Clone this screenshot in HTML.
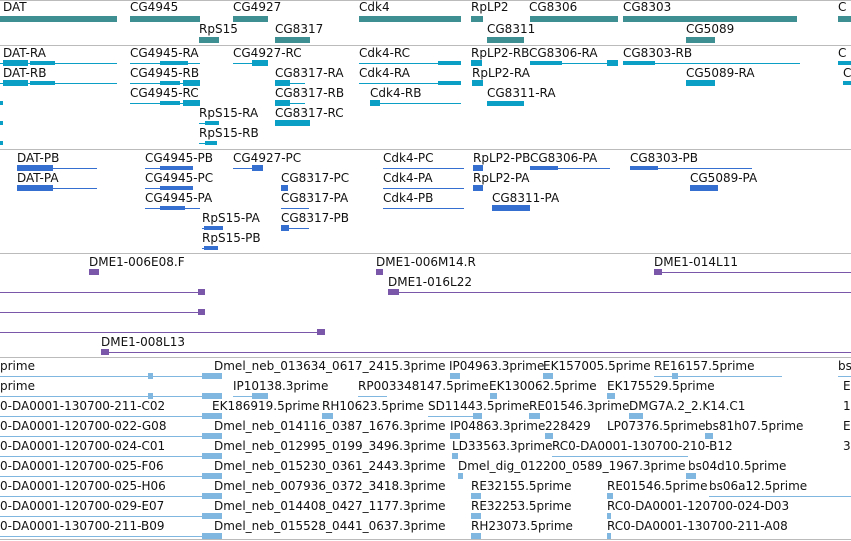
<!DOCTYPE html>
<html><head><meta charset="utf-8"><style>
body{margin:0;width:851px;height:541px;overflow:hidden;background:#fff;position:relative}
.t{position:absolute;font:12px/14px "DejaVu Sans",sans-serif;white-space:nowrap;color:#111}
.l{position:absolute;height:1px}
.b{position:absolute;height:6px}
.s{position:absolute;left:0;width:851px;height:1px;background:#bbb}
.a .l,.a .b{background:#3d8f91}
.c .l,.c .b{background:#0b9fc6}
.d .l,.d .b{background:#3570d0}
.e .l,.e .b{background:#7a57a8}
.f .l,.f .b{background:#7fb7e0}
</style></head><body>
<div class="s" style="top:0"></div>
<div class="s" style="top:45px"></div>
<div class="s" style="top:149px"></div>
<div class="s" style="top:253px"></div>
<div class="s" style="top:357px"></div>
<div class="s" style="top:539px"></div>

<div class="a">
<div class="t" style="left:3px;top:0">DAT</div><div class="b" style="left:0;width:117px;top:16px"></div>
<div class="t" style="left:130px;top:0">CG4945</div><div class="b" style="left:130px;width:70px;top:16px"></div>
<div class="t" style="left:233px;top:0">CG4927</div><div class="b" style="left:233px;width:35px;top:16px"></div>
<div class="t" style="left:359px;top:0">Cdk4</div><div class="b" style="left:359px;width:102px;top:16px"></div>
<div class="t" style="left:471px;top:0">RpLP2</div><div class="b" style="left:471px;width:12px;top:16px"></div>
<div class="t" style="left:529px;top:0">CG8306</div><div class="b" style="left:530px;width:88px;top:16px"></div>
<div class="t" style="left:623px;top:0">CG8303</div><div class="b" style="left:623px;width:174px;top:16px"></div>
<div class="t" style="left:838px;top:0">C</div><div class="b" style="left:838px;width:13px;top:16px"></div>
<div class="t" style="left:199px;top:22px">RpS15</div><div class="b" style="left:199px;width:20px;top:37px"></div>
<div class="t" style="left:275px;top:22px">CG8317</div><div class="b" style="left:275px;width:35px;top:37px"></div>
<div class="t" style="left:487px;top:22px">CG8311</div><div class="b" style="left:487px;width:37px;top:37px"></div>
<div class="t" style="left:686px;top:22px">CG5089</div><div class="b" style="left:686px;width:29px;top:37px"></div>
</div>

<div class="c">
<div class="t" style="left:3px;top:46px">DAT-RA</div><div class="l" style="left:0;width:117px;top:63px"></div><div class="b" style="left:3px;width:25px;top:60px"></div><div class="b" style="left:30px;width:25px;top:61px;height:4px"></div>
<div class="t" style="left:130px;top:46px">CG4945-RA</div><div class="l" style="left:130px;width:70px;top:63px"></div><div class="b" style="left:160px;width:28px;top:61px;height:4px"></div>
<div class="t" style="left:233px;top:46px">CG4927-RC</div><div class="l" style="left:233px;width:35px;top:63px"></div><div class="b" style="left:252px;width:16px;top:60px"></div>
<div class="t" style="left:359px;top:46px">Cdk4-RC</div><div class="l" style="left:359px;width:102px;top:63px"></div><div class="b" style="left:438px;width:23px;top:61px;height:4px"></div>
<div class="t" style="left:471px;top:46px">RpLP2-RB</div><div class="b" style="left:471px;width:11px;top:60px"></div>
<div class="t" style="left:529px;top:46px">CG8306-RA</div><div class="l" style="left:530px;width:88px;top:63px"></div><div class="b" style="left:530px;width:32px;top:61px;height:4px"></div><div class="b" style="left:607px;width:11px;top:60px"></div>
<div class="t" style="left:623px;top:46px">CG8303-RB</div><div class="l" style="left:623px;width:177px;top:63px"></div><div class="b" style="left:623px;width:32px;top:61px;height:4px"></div>
<div class="t" style="left:838px;top:46px">C</div><div class="b" style="left:838px;width:13px;top:61px;height:4px"></div>

<div class="t" style="left:3px;top:66px">DAT-RB</div><div class="l" style="left:0;width:117px;top:83px"></div><div class="b" style="left:3px;width:25px;top:80px"></div><div class="b" style="left:30px;width:25px;top:81px;height:4px"></div>
<div class="t" style="left:130px;top:66px">CG4945-RB</div><div class="l" style="left:130px;width:70px;top:83px"></div><div class="b" style="left:183px;width:17px;top:80px"></div><div class="b" style="left:160px;width:20px;top:81px;height:4px"></div>
<div class="t" style="left:275px;top:66px">CG8317-RA</div><div class="l" style="left:275px;width:30px;top:83px"></div><div class="b" style="left:275px;width:15px;top:80px"></div>
<div class="t" style="left:359px;top:66px">Cdk4-RA</div><div class="l" style="left:359px;width:102px;top:83px"></div><div class="b" style="left:438px;width:23px;top:81px;height:4px"></div>
<div class="t" style="left:472px;top:66px">RpLP2-RA</div><div class="b" style="left:472px;width:11px;top:80px"></div>
<div class="t" style="left:686px;top:66px">CG5089-RA</div><div class="b" style="left:686px;width:29px;top:80px"></div>
<div class="t" style="left:843px;top:66px">C</div><div class="b" style="left:843px;width:8px;top:81px;height:4px"></div>

<div class="b" style="left:0;width:3px;top:101px;height:4px"></div>
<div class="t" style="left:130px;top:86px">CG4945-RC</div><div class="l" style="left:130px;width:70px;top:103px"></div><div class="b" style="left:183px;width:17px;top:100px"></div><div class="b" style="left:160px;width:20px;top:101px;height:4px"></div>
<div class="t" style="left:275px;top:86px">CG8317-RB</div><div class="l" style="left:275px;width:30px;top:103px"></div><div class="b" style="left:275px;width:15px;top:100px"></div>
<div class="t" style="left:370px;top:86px">Cdk4-RB</div><div class="l" style="left:370px;width:91px;top:103px"></div><div class="b" style="left:370px;width:10px;top:100px"></div>
<div class="t" style="left:487px;top:86px">CG8311-RA</div><div class="b" style="left:487px;width:37px;top:101px;height:5px"></div>

<div class="b" style="left:0;width:3px;top:121px;height:4px"></div>
<div class="t" style="left:199px;top:106px">RpS15-RA</div><div class="l" style="left:199px;width:20px;top:123px"></div><div class="b" style="left:205px;width:14px;top:121px;height:4px"></div>
<div class="t" style="left:275px;top:106px">CG8317-RC</div><div class="b" style="left:275px;width:35px;top:120px"></div>
<div class="b" style="left:0;width:3px;top:141px;height:4px"></div>
<div class="t" style="left:199px;top:126px">RpS15-RB</div><div class="l" style="left:199px;width:18px;top:143px"></div><div class="b" style="left:205px;width:12px;top:141px;height:4px"></div>
</div>

<div class="d">
<div class="t" style="left:17px;top:151px">DAT-PB</div><div class="l" style="left:17px;width:80px;top:168px"></div><div class="b" style="left:17px;width:36px;top:165px"></div>
<div class="t" style="left:145px;top:151px">CG4945-PB</div><div class="l" style="left:145px;width:48px;top:168px"></div><div class="b" style="left:160px;width:33px;top:166px;height:4px"></div>
<div class="t" style="left:233px;top:151px">CG4927-PC</div><div class="l" style="left:233px;width:30px;top:168px"></div><div class="b" style="left:252px;width:11px;top:165px"></div>
<div class="t" style="left:383px;top:151px">Cdk4-PC</div><div class="l" style="left:383px;width:81px;top:168px"></div>
<div class="t" style="left:473px;top:151px">RpLP2-PB</div><div class="b" style="left:473px;width:10px;top:165px"></div>
<div class="t" style="left:530px;top:151px">CG8306-PA</div><div class="l" style="left:530px;width:80px;top:168px"></div><div class="b" style="left:530px;width:28px;top:166px;height:4px"></div>
<div class="t" style="left:630px;top:151px">CG8303-PB</div><div class="l" style="left:630px;width:122px;top:168px"></div><div class="b" style="left:630px;width:28px;top:166px;height:4px"></div>

<div class="t" style="left:17px;top:171px">DAT-PA</div><div class="l" style="left:17px;width:80px;top:188px"></div><div class="b" style="left:17px;width:36px;top:185px"></div>
<div class="t" style="left:145px;top:171px">CG4945-PC</div><div class="l" style="left:145px;width:48px;top:188px"></div><div class="b" style="left:160px;width:33px;top:186px;height:4px"></div>
<div class="t" style="left:281px;top:171px">CG8317-PC</div><div class="b" style="left:281px;width:7px;top:185px"></div>
<div class="t" style="left:383px;top:171px">Cdk4-PA</div><div class="l" style="left:383px;width:81px;top:188px"></div>
<div class="t" style="left:473px;top:171px">RpLP2-PA</div><div class="b" style="left:473px;width:10px;top:185px"></div>
<div class="t" style="left:690px;top:171px">CG5089-PA</div><div class="b" style="left:690px;width:28px;top:185px"></div>

<div class="t" style="left:145px;top:191px">CG4945-PA</div><div class="l" style="left:145px;width:55px;top:208px"></div><div class="b" style="left:160px;width:25px;top:206px;height:4px"></div>
<div class="t" style="left:281px;top:191px">CG8317-PA</div><div class="l" style="left:281px;width:28px;top:208px"></div>
<div class="t" style="left:383px;top:191px">Cdk4-PB</div><div class="l" style="left:383px;width:81px;top:208px"></div>
<div class="t" style="left:492px;top:191px">CG8311-PA</div><div class="b" style="left:492px;width:38px;top:205px"></div>

<div class="t" style="left:202px;top:211px">RpS15-PA</div><div class="l" style="left:202px;width:21px;top:228px"></div><div class="b" style="left:204px;width:19px;top:226px;height:4px"></div>
<div class="t" style="left:281px;top:211px">CG8317-PB</div><div class="l" style="left:281px;width:28px;top:228px"></div><div class="b" style="left:281px;width:8px;top:225px"></div>
<div class="t" style="left:202px;top:231px">RpS15-PB</div><div class="l" style="left:202px;width:16px;top:248px"></div><div class="b" style="left:204px;width:14px;top:246px;height:4px"></div>
</div>

<div class="e">
<div class="t" style="left:89px;top:255px">DME1-006E08.F</div><div class="b" style="left:89px;width:10px;top:269px"></div>
<div class="t" style="left:376px;top:255px">DME1-006M14.R</div><div class="b" style="left:376px;width:7px;top:269px"></div>
<div class="t" style="left:654px;top:255px">DME1-014L11</div><div class="l" style="left:654px;width:197px;top:272px"></div><div class="b" style="left:654px;width:8px;top:269px"></div>
<div class="t" style="left:388px;top:275px">DME1-016L22</div><div class="l" style="left:388px;width:463px;top:292px"></div><div class="b" style="left:388px;width:11px;top:289px"></div>
<div class="l" style="left:0;width:205px;top:292px"></div><div class="b" style="left:198px;width:7px;top:289px"></div>
<div class="l" style="left:0;width:205px;top:312px"></div><div class="b" style="left:198px;width:7px;top:309px"></div>
<div class="l" style="left:0;width:325px;top:332px"></div><div class="b" style="left:317px;width:8px;top:329px"></div>
<div class="t" style="left:101px;top:335px">DME1-008L13</div><div class="l" style="left:101px;width:750px;top:352px"></div><div class="b" style="left:101px;width:8px;top:349px"></div>
</div>

<div class="f">
<div class="t" style="left:0;top:359px">prime</div><div class="l" style="left:0;width:222px;top:376px"></div><div class="b" style="left:148px;width:5px;top:373px"></div><div class="b" style="left:202px;width:20px;top:373px"></div>
<div class="t" style="left:214px;top:359px">Dmel_neb_013634_0617_2415.3prime</div>
<div class="t" style="left:449px;top:359px">IP04963.3prime</div><div class="b" style="left:450px;width:10px;top:373px"></div>
<div class="t" style="left:543px;top:359px">EK157005.5prime</div><div class="b" style="left:543px;width:10px;top:373px"></div>
<div class="t" style="left:654px;top:359px">RE16157.5prime</div><div class="l" style="left:654px;width:128px;top:376px"></div><div class="b" style="left:672px;width:6px;top:373px"></div>
<div class="t" style="left:838px;top:359px">bs</div><div class="l" style="left:838px;width:13px;top:376px"></div>

<div class="t" style="left:0;top:379px">prime</div><div class="l" style="left:0;width:222px;top:396px"></div><div class="b" style="left:148px;width:5px;top:393px"></div><div class="b" style="left:202px;width:20px;top:393px"></div>
<div class="t" style="left:233px;top:379px">IP10138.3prime</div><div class="l" style="left:233px;width:35px;top:396px"></div><div class="b" style="left:252px;width:16px;top:393px"></div>
<div class="t" style="left:358px;top:379px">RP003348147.5prime</div><div class="l" style="left:358px;width:29px;top:396px"></div>
<div class="t" style="left:489px;top:379px">EK130062.5prime</div><div class="b" style="left:490px;width:7px;top:393px"></div>
<div class="t" style="left:607px;top:379px">EK175529.5prime</div><div class="b" style="left:607px;width:8px;top:393px"></div>
<div class="t" style="left:843px;top:379px">E</div>

<div class="t" style="left:0;top:399px">0-DA0001-130700-211-C02</div><div class="l" style="left:0;width:222px;top:416px"></div><div class="b" style="left:202px;width:20px;top:413px"></div>
<div class="t" style="left:212px;top:399px">EK186919.5prime</div>
<div class="t" style="left:322px;top:399px">RH10623.5prime</div><div class="b" style="left:322px;width:11px;top:413px"></div>
<div class="t" style="left:428px;top:399px">SD11443.5prime</div><div class="l" style="left:428px;width:54px;top:416px"></div><div class="b" style="left:473px;width:9px;top:413px"></div>
<div class="t" style="left:529px;top:399px">RE01546.3prime</div><div class="b" style="left:529px;width:11px;top:413px"></div>
<div class="t" style="left:629px;top:399px">DMG7A.2_2.K14.C1</div><div class="b" style="left:629px;width:14px;top:413px"></div>
<div class="t" style="left:843px;top:399px">1</div>

<div class="t" style="left:0;top:419px">0-DA0001-120700-022-G08</div><div class="l" style="left:0;width:222px;top:436px"></div><div class="b" style="left:202px;width:20px;top:433px"></div>
<div class="t" style="left:214px;top:419px">Dmel_neb_014116_0387_1676.3prime</div>
<div class="t" style="left:450px;top:419px">IP04863.3prime</div><div class="b" style="left:450px;width:10px;top:433px"></div>
<div class="t" style="left:545px;top:419px">228429</div><div class="b" style="left:545px;width:8px;top:433px"></div>
<div class="t" style="left:607px;top:419px">LP07376.5prime</div>
<div class="t" style="left:705px;top:419px">bs81h07.5prime</div><div class="b" style="left:705px;width:8px;top:433px"></div>
<div class="t" style="left:843px;top:419px">E</div>

<div class="t" style="left:0;top:439px">0-DA0001-120700-024-C01</div><div class="l" style="left:0;width:222px;top:456px"></div><div class="b" style="left:202px;width:20px;top:453px"></div>
<div class="t" style="left:214px;top:439px">Dmel_neb_012995_0199_3496.3prime</div>
<div class="t" style="left:452px;top:439px">LD33563.3prime</div><div class="b" style="left:452px;width:6px;top:453px"></div>
<div class="t" style="left:552px;top:439px">RC0-DA0001-130700-210-B12</div><div class="l" style="left:552px;width:136px;top:456px"></div>
<div class="t" style="left:843px;top:439px">3</div>

<div class="t" style="left:0;top:459px">0-DA0001-120700-025-F06</div><div class="l" style="left:0;width:222px;top:476px"></div><div class="b" style="left:202px;width:20px;top:473px"></div>
<div class="t" style="left:214px;top:459px">Dmel_neb_015230_0361_2443.3prime</div>
<div class="t" style="left:458px;top:459px">Dmel_dig_012200_0589_1967.3prime</div><div class="b" style="left:458px;width:5px;top:473px"></div>
<div class="t" style="left:688px;top:459px">bs04d10.5prime</div><div class="b" style="left:686px;width:10px;top:473px"></div>

<div class="t" style="left:0;top:479px">0-DA0001-120700-025-H06</div><div class="l" style="left:0;width:222px;top:496px"></div><div class="b" style="left:202px;width:20px;top:493px"></div>
<div class="t" style="left:214px;top:479px">Dmel_neb_007936_0372_3418.3prime</div>
<div class="t" style="left:471px;top:479px">RE32155.5prime</div><div class="b" style="left:471px;width:10px;top:493px"></div>
<div class="t" style="left:607px;top:479px">RE01546.5prime</div><div class="b" style="left:607px;width:6px;top:493px"></div>
<div class="t" style="left:709px;top:479px">bs06a12.5prime</div><div class="l" style="left:709px;width:142px;top:496px"></div>

<div class="t" style="left:0;top:499px">0-DA0001-120700-029-E07</div><div class="l" style="left:0;width:222px;top:516px"></div><div class="b" style="left:202px;width:20px;top:513px"></div>
<div class="t" style="left:214px;top:499px">Dmel_neb_014408_0427_1177.3prime</div>
<div class="t" style="left:471px;top:499px">RE32253.5prime</div><div class="b" style="left:471px;width:10px;top:513px"></div>
<div class="t" style="left:607px;top:499px">RC0-DA0001-120700-024-D03</div><div class="b" style="left:607px;width:4px;top:513px"></div>

<div class="t" style="left:0;top:519px">0-DA0001-130700-211-B09</div><div class="l" style="left:0;width:222px;top:536px"></div><div class="b" style="left:202px;width:20px;top:533px"></div>
<div class="t" style="left:214px;top:519px">Dmel_neb_015528_0441_0637.3prime</div>
<div class="t" style="left:471px;top:519px">RH23073.5prime</div><div class="b" style="left:471px;width:10px;top:533px"></div>
<div class="t" style="left:607px;top:519px">RC0-DA0001-130700-211-A08</div><div class="b" style="left:607px;width:4px;top:533px"></div>
</div>
</body></html>
